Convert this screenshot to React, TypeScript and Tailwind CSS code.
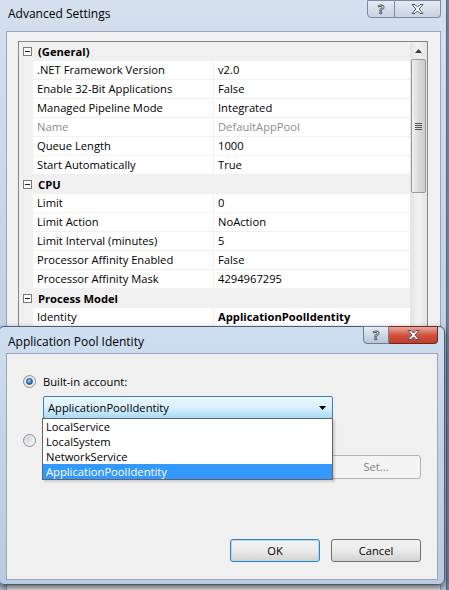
import React from 'react';

const font = { fontFamily: '"Open Sans", "Noto Sans", sans-serif' };

type Row =
  | { kind: 'cat'; name: string }
  | { kind: 'item'; name: string; value: string; dim?: boolean; bold?: boolean };

const rows: Row[] = [
  { kind: 'cat', name: '(General)' },
  { kind: 'item', name: '.NET Framework Version', value: 'v2.0' },
  { kind: 'item', name: 'Enable 32-Bit Applications', value: 'False' },
  { kind: 'item', name: 'Managed Pipeline Mode', value: 'Integrated' },
  { kind: 'item', name: 'Name', value: 'DefaultAppPool', dim: true },
  { kind: 'item', name: 'Queue Length', value: '1000' },
  { kind: 'item', name: 'Start Automatically', value: 'True' },
  { kind: 'cat', name: 'CPU' },
  { kind: 'item', name: 'Limit', value: '0' },
  { kind: 'item', name: 'Limit Action', value: 'NoAction' },
  { kind: 'item', name: 'Limit Interval (minutes)', value: '5' },
  { kind: 'item', name: 'Processor Affinity Enabled', value: 'False' },
  { kind: 'item', name: 'Processor Affinity Mask', value: '4294967295' },
  { kind: 'cat', name: 'Process Model' },
  { kind: 'item', name: 'Identity', value: 'ApplicationPoolIdentity', bold: true },
  { kind: 'item', name: '', value: '' },
  { kind: 'item', name: '', value: '' },
];

const CloseGlyph = () => (
  <svg width="13" height="10" viewBox="0 0 13 10">
    <path d="M1 0.5h3l2.5 2.6L9 0.5h3L8 5l4 4.5H9L6.5 6.9 4 9.5H1L5 5z" fill="#fff" stroke="#3c4a5c" strokeWidth="0.9" strokeLinejoin="round" />
  </svg>
);

const Expander = () => (
  <div className="w-[9px] h-[9px] border border-[#7a7a7a] bg-white flex items-center justify-center">
    <div className="w-[5px] h-px bg-[#222]" />
  </div>
);

function PropRow({ row }: { row: Row }) {
  if (row.kind === 'cat') {
    return (
      <div className="flex shrink-0 items-center h-[19px] bg-[#f0f0f0]">
        <div className="w-[14px] flex justify-center pl-[3px]">
          <Expander />
        </div>
        <span className="pl-[5px] font-bold text-black">{row.name}</span>
      </div>
    );
  }
  return (
    <div className="flex shrink-0 h-[19px]">
      <div className="w-[14px] bg-[#f0f0f0]" />
      <div className={`w-[181px] pl-[4px] flex items-center bg-white border-b border-r border-[#f0f0f0] ${row.dim ? 'text-[#8d8d8d]' : 'text-black'}`}>
        {row.name}
      </div>
      <div className={`flex-1 pl-[4px] flex items-center bg-white border-b border-[#f0f0f0] ${row.dim ? 'text-[#8d8d8d]' : 'text-black'} ${row.bold ? 'font-bold' : ''}`}>
        {row.value}
      </div>
    </div>
  );
}

function ScrollBar() {
  return (
    <div className="w-[17px] h-full shrink-0 bg-gradient-to-r from-[#e3e3e3] via-[#f2f2f2] to-[#e3e3e3] flex flex-col items-center">
      <div className="h-[17px] w-full flex items-center justify-center">
        <svg width="7" height="4" viewBox="0 0 7 4"><path d="M0 4L3.5 0 7 4z" fill="#3b3b3b" /></svg>
      </div>
      <div className="w-[15px] h-[134px] rounded-[2px] border border-[#9a9a9a] bg-gradient-to-r from-[#f1f1f1] via-[#dadada] to-[#cbcbcb] flex items-center justify-center">
        <div className="flex flex-col gap-[1px]">
          <div className="w-[7px] h-px bg-[#555]" />
          <div className="w-[7px] h-px bg-[#555]" />
          <div className="w-[7px] h-px bg-[#555]" />
          <div className="w-[7px] h-px bg-[#555]" />
        </div>
      </div>
    </div>
  );
}

function Radio({ checked }: { checked?: boolean }) {
  return (
    <div className="w-[13px] h-[13px] rounded-full border border-[#8c8f94] bg-gradient-to-br from-[#d9dcdf] to-[#f8f8f8] flex items-center justify-center">
      {checked ? (
        <div className="w-[7px] h-[7px] rounded-full bg-[radial-gradient(circle_at_40%_35%,#9fd3f5,#1f6aa8_70%)] border border-[#1c4f7c]" />
      ) : (
        <div className="w-[7px] h-[7px] rounded-full bg-gradient-to-br from-[#cfd2d6] to-[#f4f4f4]" />
      )}
    </div>
  );
}

export default function App() {
  return (
    <div className="relative w-[449px] h-[590px] overflow-hidden bg-[#6f8199] text-[11.2px] leading-none" style={font}>
      {/* Advanced Settings window */}
      <div className="absolute left-[-1px] top-[-6px] w-[448px] h-[620px] rounded-[6px] border border-[#59667a] bg-gradient-to-b from-[#d4e0ee] via-[#c3d2e5] to-[#b6c8de]">
        <div className="h-[36px] flex items-end pb-[11px] pl-[8px] relative">
          <span className="text-[12px] text-black">Advanced Settings</span>
          <div className="absolute top-[5px] left-[367px] flex">
            <div className="w-[28px] h-[18px] rounded-bl-[4px] border border-[#7b8aa0] bg-gradient-to-b from-[#e4ebf3] to-[#c8d4e3] flex items-center justify-center">
              <span className="text-[13px] font-bold text-white" style={{ WebkitTextStroke: '0.8px #3c4a5c' }}>?</span>
            </div>
            <div className="w-[46px] h-[18px] rounded-br-[4px] border border-l-0 border-[#7b8aa0] bg-gradient-to-b from-[#e4ebf3] to-[#c8d4e3] flex items-center justify-center">
              <CloseGlyph />
            </div>
          </div>
        </div>
        <div className="ml-[6px] w-[435px] h-[600px] border border-[#97a6ba] bg-[#f0f0f0] pt-[9px] pl-[11px]">
          <div className="flex w-[410px] h-[320px] overflow-hidden border border-[#828790] bg-white">
            <div className="flex-1 flex flex-col overflow-hidden">
              {rows.map((r, i) => (
                <PropRow key={i} row={r} />
              ))}
            </div>
            <ScrollBar />
          </div>
        </div>
      </div>

      {/* Application Pool Identity dialog */}
      <div className="absolute left-[-2px] top-[326px] w-[447px] h-[259px] rounded-[6px] border border-[#4e5b6e] bg-gradient-to-b from-[#cfdff1] via-[#bfd2e8] to-[#b9cbe0] shadow-[0_3px_6px_rgba(0,0,0,0.6)]">
        <div className="h-[26px] flex items-center pl-[9px] relative">
          <span className="text-[12px] text-black pt-[3px]">Application Pool Identity</span>
          <div className="absolute top-[-1px] left-[364px] flex">
            <div className="w-[26px] h-[18px] rounded-bl-[4px] border border-[#6d7d93] bg-gradient-to-b from-[#e6edf5] to-[#b6c6da] flex items-center justify-center">
              <span className="text-[13px] font-bold text-white" style={{ WebkitTextStroke: '0.8px #3c4a5c' }}>?</span>
            </div>
            <div className="w-[49px] h-[18px] rounded-br-[4px] border border-l-0 border-[#6d2a22] bg-gradient-to-b from-[#e9a99c] via-[#d0533f] to-[#c23b27] flex items-center justify-center">
              <CloseGlyph />
            </div>
          </div>
        </div>
        <div className="relative ml-[7px] w-[432px] h-[227px] border border-[#97a6ba] bg-[#f0f0f0]">
          <div className="flex items-center gap-[7px] pl-[16px] pt-[21px]">
            <Radio checked />
            <span className="text-black">Built-in account:</span>
          </div>
          <div className="ml-[36px] mt-[8px] w-[290px] h-[23px] rounded-[2px] border border-[#3c7fb1] bg-gradient-to-b from-[#eaf6fd] via-[#d9f0fc] to-[#a8d9f5] flex items-center justify-between pl-[4px] pr-[6px]">
            <span className="text-black">ApplicationPoolIdentity</span>
            <svg width="7" height="4" viewBox="0 0 7 4"><path d="M0 0h7L3.5 4z" fill="#000" /></svg>
          </div>

          <div className="flex items-center gap-[7px] pl-[16px] mt-[15px]">
            <Radio />
            <span className="text-black">Custom account:</span>
          </div>
          <div className="flex gap-[9px] ml-[36px] mt-[8px]">
            <div className="w-[279px] h-[24px] border border-[#abadb3] bg-[#f4f4f4]" />
            <div className="w-[90px] h-[24px] rounded-[3px] border border-[#adb2b5] bg-[#f4f4f4] flex items-center justify-center text-[#838383]">
              Set...
            </div>
          </div>

          {/* open dropdown list */}
          <div className="absolute left-[35px] top-[64px] w-[291px] border border-[#646464] bg-white flex flex-col shadow-[2px_2px_2px_rgba(0,0,0,0.15)]">
            <div className="h-[15px] pl-[3px] flex items-center text-black">LocalService</div>
            <div className="h-[15px] pl-[3px] flex items-center text-black">LocalSystem</div>
            <div className="h-[15px] pl-[3px] flex items-center text-black">NetworkService</div>
            <div className="h-[15px] pl-[3px] flex items-center bg-[#3399ff] text-white">ApplicationPoolIdentity</div>
          </div>

          <div className="absolute right-[16px] bottom-[17px] flex gap-[11px]">
            <div className="w-[90px] h-[23px] rounded-[3px] border border-[#3c7fb1] shadow-[inset_0_0_0_1px_#a6dcf6] bg-gradient-to-b from-[#f2f2f2] via-[#ebebeb] to-[#d2d2d2] flex items-center justify-center text-black">
              OK
            </div>
            <div className="w-[90px] h-[23px] rounded-[3px] border border-[#707070] bg-gradient-to-b from-[#f2f2f2] via-[#ebebeb] to-[#d2d2d2] flex items-center justify-center text-black">
              Cancel
            </div>
          </div>
        </div>
      </div>
    </div>
  );
}
